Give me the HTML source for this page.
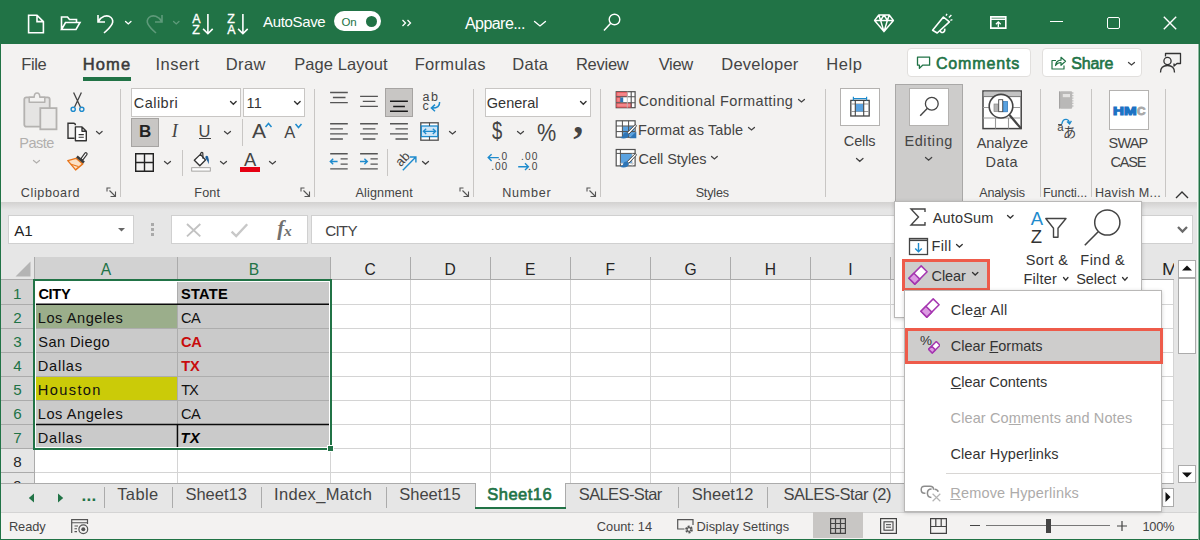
<!DOCTYPE html>
<html lang="en"><head><meta charset="utf-8"><title>Excel - Clear Formats</title>
<style>
html,body{margin:0;padding:0}
body{width:1200px;height:540px;position:relative;overflow:hidden;background:#e6e6e6;font-family:'Liberation Sans', sans-serif;}
.a{position:absolute;display:block}
.t{position:absolute;white-space:pre;line-height:1;display:block}
u{text-decoration:underline;text-underline-offset:1px}

</style></head>
<body>
<div class="a" style="left:0px;top:0px;width:1200px;height:44px;background:#217346;"></div>
<svg class="a" style="left:26px;top:13px;" width="20" height="22" viewBox="0 0 20 22"><path d="M2.6 2.2 H11 L17.4 8.6 V19.8 H2.6 Z M11 2.2 V8.6 H17.4" fill="none" stroke="#fff" stroke-width="1.6" stroke-linejoin="miter"/></svg>
<svg class="a" style="left:59px;top:14px;" width="24" height="18" viewBox="0 0 24 18"><path d="M2.5 15.5 V3 H8.5 L10.5 5.5 H17.5 V8.5 M2.5 15.5 L6.5 8.5 H21 L17 15.5 Z" fill="none" stroke="#fff" stroke-width="1.6" stroke-linejoin="miter"/></svg>
<svg class="a" style="left:95px;top:12px;" width="22" height="23" viewBox="0 0 22 23"><path d="M3 3 V10 H10 M3.5 9.5 C6 4.5 12 2 16 5.5 C20 9.5 17 14 9 21" fill="none" stroke="#fff" stroke-width="1.6" stroke-linejoin="miter"/></svg>
<svg class="a" style="left:122.5px;top:18.5px;" width="10.5" height="7.5" viewBox="0 0 10.5 7.5"><path d="M2.56 2.56 L5.25 4.94 L7.94 2.56" fill="none" stroke="#fff" stroke-width="1.4" stroke-linecap="round" stroke-linejoin="miter"/></svg>
<svg class="a" style="left:143px;top:12px;" width="22" height="23" viewBox="0 0 22 23"><path d="M19 3 V10 H12 M18.5 9.5 C16 4.5 10 2 6 5.5 C2 9.5 5 14 13 21" fill="none" stroke="#5e9a7a" stroke-width="1.6"/></svg>
<svg class="a" style="left:171px;top:18.5px;" width="10.5" height="7.5" viewBox="0 0 10.5 7.5"><path d="M2.56 2.56 L5.25 4.94 L7.94 2.56" fill="none" stroke="#5e9a7a" stroke-width="1.4" stroke-linecap="round" stroke-linejoin="miter"/></svg>
<span class="t" style="left:192.37px;top:13.00px;font-size:12.4px;color:#fff;-webkit-text-stroke:0.35px #fff;">A</span>
<span class="t" style="left:192.26px;top:24.00px;font-size:12.4px;color:#fff;-webkit-text-stroke:0.35px #fff;">Z</span>
<svg class="a" style="left:201px;top:12px;" width="14" height="24" viewBox="0 0 14 24"><path d="M6.9 1.9 V21.4 M2.1 16.9 L6.9 21.7 L11.7 16.9" fill="none" stroke="#fff" stroke-width="1.6" stroke-linejoin="miter"/></svg>
<span class="t" style="left:227.26px;top:13.00px;font-size:12.4px;color:#fff;-webkit-text-stroke:0.35px #fff;">Z</span>
<span class="t" style="left:227.37px;top:24.00px;font-size:12.4px;color:#fff;-webkit-text-stroke:0.35px #fff;">A</span>
<svg class="a" style="left:236px;top:12px;" width="14" height="24" viewBox="0 0 14 24"><path d="M6.9 1.9 V21.4 M2.1 16.9 L6.9 21.7 L11.7 16.9" fill="none" stroke="#fff" stroke-width="1.6" stroke-linejoin="miter"/></svg>
<span class="t" style="left:262.97px;top:14.00px;font-size:15px;color:#fff;letter-spacing:-0.336px;">AutoSave</span>
<div class="a" style="left:334px;top:11px;width:47px;height:20px;background:#fff;border-radius:10px;"></div>
<span class="t" style="left:341.46px;top:17.00px;font-size:11.5px;color:#217346;letter-spacing:-0.052px;">On</span>
<div class="a" style="left:365.5px;top:15.5px;width:11px;height:11px;background:#217346;border-radius:6px;"></div>
<svg class="a" style="left:400px;top:18px;" width="14" height="10" viewBox="0 0 14 10"><path d="M2.5 2 L5.5 5 L2.5 8 M7.5 2 L10.5 5 L7.5 8" fill="none" stroke="#fff" stroke-width="1.3"/></svg>
<span class="t" style="left:464.97px;top:16.00px;font-size:16px;color:#fff;letter-spacing:-0.556px;">Appare...</span>
<svg class="a" style="left:532px;top:18.5px;" width="16" height="9.5" viewBox="0 0 16 9.5"><path d="M2.56 2.56 L8.00 6.94 L13.44 2.56" fill="none" stroke="#fff" stroke-width="1.4" stroke-linecap="round" stroke-linejoin="miter"/></svg>
<svg class="a" style="left:600px;top:11px;" width="24" height="24" viewBox="0 0 24 24"><circle cx="14.5" cy="8.5" r="5.3" fill="none" stroke="#fff" stroke-width="1.4"/><path d="M10.7 12.3 L4 19.5" stroke="#fff" stroke-width="1.5" fill="none"/></svg>
<svg class="a" style="left:872px;top:13px;" width="24" height="21" viewBox="0 0 24 21"><path d="M6.8 2 H17.2 L21.4 7.4 L12 18.6 L2.6 7.4 Z M2.6 7.4 H21.4 M8.6 7.4 L12 18.6 L15.4 7.4 M6.8 2 L8.6 7.4 L12 2 L15.4 7.4 L17.2 2" fill="none" stroke="#fff" stroke-width="1.5" stroke-linejoin="round"/></svg>
<svg class="a" style="left:930px;top:12px;" width="24" height="24" viewBox="0 0 24 24"><path d="M13.4 5 L19.4 9.8 L7.2 21 L2.6 18.3 Z M10.2 18.6 C10.8 21.8 15.4 21 14.7 16.6" fill="none" stroke="#fff" stroke-width="1.6" stroke-linejoin="round"/><path d="M16 3.6 L17 1.8 M18.9 5.6 L21.4 3 M20.4 8.3 L22.4 7.7" stroke="#fff" stroke-width="1.4" fill="none"/></svg>
<svg class="a" style="left:989px;top:14.5px;" width="19" height="15" viewBox="0 0 19 15"><path d="M1.8 1.9 H16.8 V13.1 H1.8 Z M1.8 4.2 H16.8" fill="none" stroke="#fff" stroke-width="1.6" stroke-linejoin="miter"/><path d="M9.3 12 V7 M6.9 9.2 L9.3 6.8 L11.7 9.2" fill="none" stroke="#fff" stroke-width="1.3"/></svg>
<div class="a" style="left:1049.5px;top:20.5px;width:13.5px;height:1.4px;background:#fff;"></div>
<div class="a" style="left:1106.5px;top:16.5px;width:13px;height:12.5px;border:1.4px solid #fff;box-sizing:border-box;border-radius:2px;"></div>
<svg class="a" style="left:1162px;top:15px;" width="16" height="16" viewBox="0 0 16 16"><path d="M1.8 1.8 L14.2 14.2 M14.2 1.8 L1.8 14.2" stroke="#fff" stroke-width="1.4" fill="none"/></svg>
<div class="a" style="left:0px;top:44px;width:1200px;height:158px;background:#f3f2f1;"></div>
<span class="t" style="left:21.15px;top:56.00px;font-size:16.5px;color:#444;letter-spacing:-0.336px;">File</span>
<span class="t" style="left:155.48px;top:56.00px;font-size:16.5px;color:#444;letter-spacing:0.472px;">Insert</span>
<span class="t" style="left:225.65px;top:56.00px;font-size:16.5px;color:#444;letter-spacing:0.433px;">Draw</span>
<span class="t" style="left:294.15px;top:56.00px;font-size:16.5px;color:#444;letter-spacing:0.080px;">Page Layout</span>
<span class="t" style="left:414.65px;top:56.00px;font-size:16.5px;color:#444;letter-spacing:0.312px;">Formulas</span>
<span class="t" style="left:512.35px;top:56.00px;font-size:16.5px;color:#444;letter-spacing:0.265px;">Data</span>
<span class="t" style="left:575.95px;top:56.00px;font-size:16.5px;color:#444;letter-spacing:-0.259px;">Review</span>
<span class="t" style="left:658.63px;top:56.00px;font-size:16.5px;color:#444;letter-spacing:-0.279px;">View</span>
<span class="t" style="left:721.35px;top:56.00px;font-size:16.5px;color:#444;letter-spacing:0.214px;">Developer</span>
<span class="t" style="left:826.15px;top:56.00px;font-size:16.5px;color:#444;letter-spacing:0.636px;">Help</span>
<span class="t" style="left:82.65px;top:56.00px;font-size:16.5px;color:#3a3a3a;letter-spacing:1.157px;-webkit-text-stroke:0.55px #3a3a3a;">Home</span>
<div class="a" style="left:83px;top:77px;width:48px;height:4px;background:#217346;"></div>
<div class="a" style="left:906.6px;top:48.3px;width:124px;height:29px;background:#fff;border:1px solid #e1dfdd;box-sizing:border-box;border-radius:4px;"></div>
<svg class="a" style="left:916px;top:54.5px;" width="16" height="16" viewBox="0 0 16 16"><path d="M1.5 2.2 H13.6 V10.2 H6.6 L3.4 13.4 V10.2 H1.5 Z" fill="none" stroke="#217346" stroke-width="1.3" stroke-linejoin="round"/></svg>
<span class="t" style="left:935.99px;top:56.00px;font-size:16px;color:#217346;letter-spacing:0.833px;-webkit-text-stroke:0.6px #217346;">Comments</span>
<div class="a" style="left:1041.6px;top:48.3px;width:100px;height:29px;background:#fff;border:1px solid #e1dfdd;box-sizing:border-box;border-radius:4px;"></div>
<svg class="a" style="left:1049.5px;top:54px;" width="17" height="17" viewBox="0 0 17 17"><path d="M6 6.5 H2 V15 H14 V11.5 M5.5 11.5 C6 8 8.5 6.3 11 6.2 V3.3 L15.5 7.3 L11 11.3 V8.5 C8.5 8.5 7 9.3 5.5 11.5 Z" fill="none" stroke="#217346" stroke-width="1.2" stroke-linejoin="round"/></svg>
<span class="t" style="left:1071.27px;top:56.00px;font-size:16px;color:#217346;letter-spacing:-0.166px;-webkit-text-stroke:0.6px #217346;">Share</span>
<svg class="a" style="left:1126px;top:59.5px;" width="11" height="7.5" viewBox="0 0 11 7.5"><path d="M2.52 2.52 L5.50 4.98 L8.48 2.52" fill="none" stroke="#444" stroke-width="1.3" stroke-linecap="round" stroke-linejoin="miter"/></svg>
<svg class="a" style="left:1158px;top:51px;" width="25" height="24" viewBox="0 0 25 24"><circle cx="9.5" cy="10" r="3.6" fill="none" stroke="#333" stroke-width="1.3"/><path d="M2.5 21.5 C2.5 16 5.5 14.5 9.5 14.5 C13.5 14.5 16.5 16 16.5 21.5" fill="none" stroke="#333" stroke-width="1.3"/><path d="M7.5 5.5 V2.5 H22.5 V12.5 H19 L16 15 V12.5" fill="none" stroke="#333" stroke-width="1.3" stroke-linejoin="round"/></svg>
<svg class="a" style="left:22px;top:91px;" width="37" height="41" viewBox="0 0 37 41"><rect x="2.3" y="6.3" width="25.4" height="29.4" rx="2" fill="#e5e4e3" stroke="#b4b2b0" stroke-width="1.8"/><path d="M7.2 11.2 V6.2 H12.2 Q12.2 2 15 2 Q17.8 2 17.8 6.2 H22.8 V11.2 Z" fill="#f3f2f1" stroke="#b4b2b0" stroke-width="1.5" stroke-linejoin="round"/><rect x="18.3" y="17.1" width="16.2" height="21.2" fill="#ecebea" stroke="#b4b2b0" stroke-width="1.8"/></svg>
<span class="t" style="left:19.31px;top:136.00px;font-size:14.5px;color:#b1afad;letter-spacing:-0.540px;">Paste</span>
<svg class="a" style="left:30.6px;top:157.8px;" width="11.0" height="7.5" viewBox="0 0 11.0 7.5"><path d="M2.48 2.48 L5.50 5.02 L8.52 2.48" fill="none" stroke="#b1afad" stroke-width="1.2" stroke-linecap="round" stroke-linejoin="miter"/></svg>
<svg class="a" style="left:69px;top:91px;" width="17" height="23" viewBox="0 0 17 23"><path d="M4.6 1.5 L11.4 16 M12.4 1.5 L5.6 16" stroke="#444" stroke-width="1.3" fill="none"/><circle cx="4.2" cy="18.3" r="2.1" fill="none" stroke="#1e8bcd" stroke-width="1.4"/><circle cx="12.8" cy="18.3" r="2.1" fill="none" stroke="#1e8bcd" stroke-width="1.4"/></svg>
<svg class="a" style="left:66px;top:121px;" width="23" height="22" viewBox="0 0 23 22"><path d="M8.6 17.2 H2 V2.2 H7.6 Q9.4 2.2 9.4 4.2" fill="none" stroke="#333" stroke-width="1.4"/><path d="M9.4 5.9 H16 L20.3 10.2 V19.7 H9.4 Z M16 5.9 V10.2 H20.3" fill="#fff" stroke="#333" stroke-width="1.4" stroke-linejoin="round"/><path d="M12.6 13.6 H17.8 M12.6 16.2 H17.8" stroke="#333" stroke-width="1.1"/></svg>
<svg class="a" style="left:94px;top:128.6px;" width="10.6" height="7.4" viewBox="0 0 10.6 7.4"><path d="M2.52 2.52 L5.30 4.88 L8.08 2.52" fill="none" stroke="#444" stroke-width="1.3" stroke-linecap="round" stroke-linejoin="miter"/></svg>
<svg class="a" style="left:66px;top:150px;" width="23" height="22" viewBox="0 0 23 22"><path d="M1.8 10.6 L10 8.3 L16.8 13.9 L9.6 19.9 Z" fill="#fbe0c4" stroke="#e8751a" stroke-width="1.4" stroke-linejoin="round"/><path d="M5 14.2 L12.4 16.6" stroke="#e8751a" stroke-width="1.1"/><path d="M19.9 3.9 L16.3 8.8" stroke="#3a3a3a" stroke-width="3.6" stroke-linecap="round"/><path d="M19.9 3.9 L16.5 8.5" stroke="#fff" stroke-width="1.2" stroke-linecap="round"/><path d="M10.9 6.4 L18 12.4" stroke="#3a3a3a" stroke-width="2.6"/></svg>
<span class="t" style="left:20.86px;top:187.00px;font-size:12.6px;color:#444;letter-spacing:0.581px;">Clipboard</span>
<svg class="a" style="left:105.5px;top:186.5px;" width="11" height="11" viewBox="0 0 11 11"><path d="M1 4.5 V1 H4.5 M3.5 3.5 L9 9 M9.5 4.5 V9.5 H4.5" fill="none" stroke="#555" stroke-width="1.1"/></svg>
<div class="a" style="left:120px;top:89px;width:1px;height:108px;background:#c8c6c4;"></div>
<div class="a" style="left:131px;top:88px;width:110px;height:29px;background:#fff;border:1px solid #c8c6c4;box-sizing:border-box;"></div>
<span class="t" style="left:133.76px;top:96.00px;font-size:14.5px;color:#333;letter-spacing:0.470px;">Calibri</span>
<svg class="a" style="left:228px;top:98.8px;" width="10.7" height="7.8" viewBox="0 0 10.7 7.8"><path d="M2.56 2.56 L5.35 5.24 L8.14 2.56" fill="none" stroke="#333" stroke-width="1.4" stroke-linecap="round" stroke-linejoin="miter"/></svg>
<div class="a" style="left:243px;top:88px;width:62px;height:29px;background:#fff;border:1px solid #c8c6c4;box-sizing:border-box;"></div>
<span class="t" style="left:246.40px;top:96.00px;font-size:14.5px;color:#333;letter-spacing:0.250px;">11</span>
<svg class="a" style="left:291.8px;top:98.8px;" width="10.7" height="7.8" viewBox="0 0 10.7 7.8"><path d="M2.56 2.56 L5.35 5.24 L8.14 2.56" fill="none" stroke="#333" stroke-width="1.4" stroke-linecap="round" stroke-linejoin="miter"/></svg>
<div class="a" style="left:131px;top:118px;width:28px;height:29px;background:#c8c6c4;border:1px solid #a6a4a2;box-sizing:border-box;"></div>
<span class="t" style="left:138.93px;top:123.00px;font-size:17px;font-weight:700;color:#222;">B</span>
<span class="t" style="left:171.68px;top:122.00px;font-size:18px;font-style:italic;font-family:'Liberation Serif', serif;color:#444;">I</span>
<span class="t" style="left:198.44px;top:123.00px;font-size:16.5px;color:#444;">U</span>
<div class="a" style="left:198.5px;top:138.3px;width:12px;height:1.2px;background:#444;"></div>
<svg class="a" style="left:221.8px;top:128.7px;" width="11.0" height="7.5" viewBox="0 0 11.0 7.5"><path d="M2.52 2.52 L5.50 4.98 L8.48 2.52" fill="none" stroke="#444" stroke-width="1.3" stroke-linecap="round" stroke-linejoin="miter"/></svg>
<div class="a" style="left:242px;top:119px;width:1px;height:27px;background:#c8c6c4;"></div>
<span class="t" style="left:251.99px;top:120.00px;font-size:21px;color:#444;">A</span>
<svg class="a" style="left:264px;top:121px;" width="9" height="8" viewBox="0 0 9 8"><path d="M1.5 6 L4.5 2.5 L7.5 6" fill="none" stroke="#1e8bcd" stroke-width="1.5"/></svg>
<span class="t" style="left:284.34px;top:124.00px;font-size:16.5px;color:#444;">A</span>
<svg class="a" style="left:294px;top:121.5px;" width="9" height="8" viewBox="0 0 9 8"><path d="M1.5 2 L4.5 5.5 L7.5 2" fill="none" stroke="#1e8bcd" stroke-width="1.5"/></svg>
<svg class="a" style="left:134px;top:151.5px;" width="21" height="21" viewBox="0 0 21 21"><path d="M1.7 1.7 H19.3 V19.3 H1.7 Z M10.5 1.7 V19.3 M1.7 10.5 H19.3" fill="none" stroke="#222" stroke-width="1.4"/></svg>
<svg class="a" style="left:161.9px;top:158.5px;" width="11.0" height="7.5" viewBox="0 0 11.0 7.5"><path d="M2.52 2.52 L5.50 4.98 L8.48 2.52" fill="none" stroke="#444" stroke-width="1.3" stroke-linecap="round" stroke-linejoin="miter"/></svg>
<div class="a" style="left:182px;top:149.5px;width:1px;height:26.0px;background:#c8c6c4;"></div>
<svg class="a" style="left:190px;top:150px;" width="23" height="23" viewBox="0 0 23 23"><path d="M4.3 10.3 L10.4 4.4 L15.5 10 L9.8 15.7 Z" fill="#fff" stroke="#333" stroke-width="1.3" stroke-linejoin="round"/><path d="M10.3 4.6 L11 2.9 Q11.9 1.9 12.8 2.9 L13 8.8" fill="none" stroke="#333" stroke-width="1.2"/><path d="M15.3 6.8 Q16.8 5 18 6.6 Q19.4 9.6 18.7 14.3 Q17.4 10.6 15.6 8.6 Z" fill="#1f5f9a"/><rect x="1.7" y="17.7" width="18.6" height="3.4" fill="#fff" stroke="#9c9a98" stroke-width="0.9"/></svg>
<svg class="a" style="left:217.9px;top:158.5px;" width="11.0" height="7.5" viewBox="0 0 11.0 7.5"><path d="M2.52 2.52 L5.50 4.98 L8.48 2.52" fill="none" stroke="#444" stroke-width="1.3" stroke-linecap="round" stroke-linejoin="miter"/></svg>
<span class="t" style="left:244.11px;top:151.00px;font-size:18.4px;color:#444;">A</span>
<div class="a" style="left:240px;top:167px;width:20px;height:4.6px;background:#e60012;"></div>
<svg class="a" style="left:266.9px;top:158.5px;" width="11.0" height="7.5" viewBox="0 0 11.0 7.5"><path d="M2.52 2.52 L5.50 4.98 L8.48 2.52" fill="none" stroke="#444" stroke-width="1.3" stroke-linecap="round" stroke-linejoin="miter"/></svg>
<span class="t" style="left:194.37px;top:187.00px;font-size:12.6px;color:#444;letter-spacing:0.141px;">Font</span>
<svg class="a" style="left:299.5px;top:186.5px;" width="11" height="11" viewBox="0 0 11 11"><path d="M1 4.5 V1 H4.5 M3.5 3.5 L9 9 M9.5 4.5 V9.5 H4.5" fill="none" stroke="#555" stroke-width="1.1"/></svg>
<div class="a" style="left:314px;top:89px;width:1px;height:108px;background:#c8c6c4;"></div>
<svg class="a" style="left:329px;top:90px;" width="22" height="16" viewBox="0 0 22 16"><path d="M1.10 2.50 H18.80 M3.90 7.50 H16.50 M1.10 12.60 H18.80 " stroke="#555" stroke-width="1.35" fill="none"/></svg>
<svg class="a" style="left:359px;top:94px;" width="22" height="16" viewBox="0 0 22 16"><path d="M1.10 2.30 H18.90 M3.80 7.30 H16.40 M1.10 12.40 H18.90 " stroke="#555" stroke-width="1.35" fill="none"/></svg>
<div class="a" style="left:385px;top:88px;width:28px;height:29px;background:#c8c6c4;border:1px solid #a6a4a2;box-sizing:border-box;"></div>
<svg class="a" style="left:389px;top:99px;" width="22" height="16" viewBox="0 0 22 16"><path d="M1.00 2.30 H18.90 M4.20 7.40 H15.90 M1.00 12.30 H18.90 " stroke="#1a1a1a" stroke-width="1.5" fill="none"/></svg>
<span class="t" style="left:422.47px;top:91.00px;font-size:12.5px;color:#444;letter-spacing:1.550px;">ab</span>
<span class="t" style="left:422.47px;top:100.00px;font-size:12.5px;color:#444;">c</span>
<svg class="a" style="left:429px;top:100px;" width="13" height="13" viewBox="0 0 13 13"><path d="M10.6 2 Q11 8.2 3 8 M6 4.6 L2.4 8 L6 11.2" fill="none" stroke="#1e8bcd" stroke-width="1.5"/></svg>
<svg class="a" style="left:329px;top:121px;" width="22" height="22" viewBox="0 0 22 22"><path d="M1.10 2.70 H18.80 M1.10 7.80 H13.90 M1.10 12.90 H18.80 M1.10 18.00 H13.90 " stroke="#555" stroke-width="1.35" fill="none"/></svg>
<svg class="a" style="left:359px;top:121px;" width="22" height="22" viewBox="0 0 22 22"><path d="M1.10 2.70 H18.90 M3.80 7.80 H16.40 M1.10 12.90 H18.90 M3.80 18.00 H16.40 " stroke="#555" stroke-width="1.35" fill="none"/></svg>
<svg class="a" style="left:389px;top:121px;" width="22" height="22" viewBox="0 0 22 22"><path d="M1.00 2.70 H18.90 M6.50 7.80 H18.90 M1.00 12.90 H18.90 M6.50 18.00 H18.90 " stroke="#555" stroke-width="1.35" fill="none"/></svg>
<svg class="a" style="left:419px;top:121px;" width="21" height="21" viewBox="0 0 21 21"><rect x="1.8" y="1.8" width="17.4" height="17.4" fill="#fff" stroke="#505050" stroke-width="1.3"/><rect x="2.3" y="5" width="16.4" height="10.6" fill="#cfe6f7" stroke="#1e8bcd" stroke-width="1.3"/><path d="M10.5 1.8 V5 M10.5 15.6 V19.2" stroke="#505050" stroke-width="1.1"/><path d="M4.6 10.3 H16.4 M7.2 7.7 L4.4 10.3 L7.2 12.9 M13.8 7.7 L16.6 10.3 L13.8 12.9" fill="none" stroke="#1e8bcd" stroke-width="1.3"/></svg>
<svg class="a" style="left:447.2px;top:128.6px;" width="11.0" height="7.5" viewBox="0 0 11.0 7.5"><path d="M2.52 2.52 L5.50 4.98 L8.48 2.52" fill="none" stroke="#444" stroke-width="1.3" stroke-linecap="round" stroke-linejoin="miter"/></svg>
<svg class="a" style="left:329px;top:151px;" width="22" height="21" viewBox="0 0 22 21"><path d="M1.20 2.70 H18.70 M11.60 7.90 H18.70 M11.60 13.10 H18.70 M1.20 17.90 H18.70 " stroke="#555" stroke-width="1.35" fill="none"/></svg>
<svg class="a" style="left:328px;top:156px;" width="12" height="11" viewBox="0 0 12 11"><path d="M2.3 5.5 H9.6 M5.2 2.7 L2.3 5.5 L5.2 8.3" fill="none" stroke="#1e8bcd" stroke-width="1.4"/></svg>
<svg class="a" style="left:359px;top:151px;" width="22" height="21" viewBox="0 0 22 21"><path d="M1.10 2.70 H18.80 M11.50 7.90 H18.80 M11.50 13.10 H18.80 M1.10 17.90 H18.80 " stroke="#555" stroke-width="1.35" fill="none"/></svg>
<svg class="a" style="left:358px;top:156px;" width="12" height="11" viewBox="0 0 12 11"><path d="M2 5.5 H9.3 M6.4 2.7 L9.3 5.5 L6.4 8.3" fill="none" stroke="#1e8bcd" stroke-width="1.4"/></svg>
<div class="a" style="left:387px;top:149px;width:1px;height:26.5px;background:#c8c6c4;"></div>
<svg class="a" style="left:392px;top:148px;" width="28" height="26" viewBox="0 0 28 26"><text x="10.4" y="10.8" font-size="13" fill="#444" text-anchor="middle" dominant-baseline="central" transform="rotate(-47 10.4 10.8)" font-family="'Liberation Sans', sans-serif">ab</text><path d="M10.8 22.2 L23.8 9 M18 9 H23.9 V14.6" fill="none" stroke="#1e8bcd" stroke-width="1.4"/></svg>
<svg class="a" style="left:420px;top:159px;" width="11" height="7.6" viewBox="0 0 11 7.6"><path d="M2.52 2.52 L5.50 5.08 L8.48 2.52" fill="none" stroke="#444" stroke-width="1.3" stroke-linecap="round" stroke-linejoin="miter"/></svg>
<span class="t" style="left:355.48px;top:187.00px;font-size:12.6px;color:#444;letter-spacing:0.150px;">Alignment</span>
<svg class="a" style="left:459px;top:186.5px;" width="11" height="11" viewBox="0 0 11 11"><path d="M1 4.5 V1 H4.5 M3.5 3.5 L9 9 M9.5 4.5 V9.5 H4.5" fill="none" stroke="#555" stroke-width="1.1"/></svg>
<div class="a" style="left:473px;top:89px;width:1px;height:108px;background:#c8c6c4;"></div>
<div class="a" style="left:484.5px;top:88px;width:106.5px;height:29px;background:#fff;border:1px solid #c8c6c4;box-sizing:border-box;"></div>
<span class="t" style="left:486.77px;top:96.00px;font-size:14.5px;color:#333;letter-spacing:0.034px;">General</span>
<svg class="a" style="left:578px;top:98.8px;" width="10.6" height="7.8" viewBox="0 0 10.6 7.8"><path d="M2.56 2.56 L5.30 5.24 L8.04 2.56" fill="none" stroke="#333" stroke-width="1.4" stroke-linecap="round" stroke-linejoin="miter"/></svg>
<span class="t" style="left:492.33px;top:120.00px;font-size:23px;color:#444;transform:scaleX(0.8);transform-origin:0 50%;">$</span>
<svg class="a" style="left:515px;top:128.6px;" width="11" height="7.5" viewBox="0 0 11 7.5"><path d="M2.52 2.52 L5.50 4.98 L8.48 2.52" fill="none" stroke="#444" stroke-width="1.3" stroke-linecap="round" stroke-linejoin="miter"/></svg>
<span class="t" style="left:537.23px;top:122.00px;font-size:23.5px;color:#444;transform:scaleX(0.92);transform-origin:0 50%;">%</span>
<span class="t" style="left:573.30px;top:100.00px;font-size:40px;font-weight:700;font-family:'Liberation Serif', serif;color:#444;">,</span>
<svg class="a" style="left:486px;top:152px;" width="16" height="12" viewBox="0 0 16 12"><path d="M2.3 5.6 H12.8 M5.6 2.2 L2.2 5.6 L5.6 9" fill="none" stroke="#1e8bcd" stroke-width="1.4"/></svg>
<span class="t" style="left:497.67px;top:152.00px;font-size:10.2px;color:#444;letter-spacing:0.930px;">.0</span>
<span class="t" style="left:491.27px;top:162.00px;font-size:10.2px;color:#444;letter-spacing:0.829px;">.00</span>
<span class="t" style="left:521.07px;top:152.00px;font-size:10.2px;color:#444;letter-spacing:1.129px;">.00</span>
<svg class="a" style="left:516px;top:160.5px;" width="16" height="12" viewBox="0 0 16 12"><path d="M2.2 5.7 H12.3 M9 2.3 L12.4 5.7 L9 9.1" fill="none" stroke="#1e8bcd" stroke-width="1.4"/></svg>
<span class="t" style="left:528.07px;top:162.00px;font-size:10.2px;color:#444;letter-spacing:0.930px;">.0</span>
<span class="t" style="left:502.27px;top:187.00px;font-size:12.6px;color:#444;letter-spacing:0.729px;">Number</span>
<svg class="a" style="left:586px;top:186.5px;" width="11" height="11" viewBox="0 0 11 11"><path d="M1 4.5 V1 H4.5 M3.5 3.5 L9 9 M9.5 4.5 V9.5 H4.5" fill="none" stroke="#555" stroke-width="1.1"/></svg>
<div class="a" style="left:600px;top:89px;width:1px;height:108px;background:#c8c6c4;"></div>
<svg class="a" style="left:614.5px;top:90px;" width="22" height="20" viewBox="0 0 22 20"><rect x="1.2" y="1.7" width="18.9" height="16" fill="#fff" stroke="#505050" stroke-width="1.2"/><rect x="1.8" y="2.3" width="10.4" height="4" fill="#f4868a" stroke="#e8474c" stroke-width="0.8"/><rect x="1.8" y="7.4" width="3.4" height="4.7" fill="#f4868a" stroke="#e8474c" stroke-width="0.8"/><rect x="5.2" y="7.4" width="3" height="4.7" fill="#2e75b6"/><rect x="1.8" y="13.3" width="14.4" height="3.8" fill="#f4868a" stroke="#e8474c" stroke-width="0.8"/><path d="M1.2 6.8 H20.1 M1.2 12.7 H20.1 M16.2 1.7 V17.7" stroke="#505050" stroke-width="1.1" fill="none"/><path d="M12.3 1.7 V17.7" stroke="#b8b8b8" stroke-width="0.9" fill="none"/></svg>
<span class="t" style="left:638.46px;top:94.00px;font-size:14.5px;color:#444;letter-spacing:0.409px;">Conditional Formatting</span>
<svg class="a" style="left:796px;top:96.5px;" width="11" height="7.5" viewBox="0 0 11 7.5"><path d="M2.52 2.52 L5.50 4.98 L8.48 2.52" fill="none" stroke="#444" stroke-width="1.3" stroke-linecap="round" stroke-linejoin="miter"/></svg>
<svg class="a" style="left:614.5px;top:119px;" width="23" height="21" viewBox="0 0 23 21"><rect x="1.2" y="1.8" width="18.9" height="16.4" fill="#fff" stroke="#505050" stroke-width="1.2"/><rect x="7.6" y="7.2" width="12" height="10.5" fill="#5aa2e0"/><path d="M1.2 7 H20.1 M1.2 12.6 H20.1 M7.4 1.8 V18.2 M13.6 1.8 V18.2" stroke="#505050" stroke-width="1" fill="none"/><path d="M21.3 12.5 V19.2 H14.5 Z" fill="#2e75b6"/><path d="M19.6 6.2 L12.2 13.6 L13.8 15.2 L21 7.6 Q21.7 6.4 20.9 5.8 Q20.2 5.5 19.6 6.2 Z" fill="#fff" stroke="#444" stroke-width="1"/><path d="M11.8 13.6 Q8.6 13.4 8 16.4 Q7.4 18.2 4.6 18.6 Q9 20.4 12.4 18.4 Q14.6 16.6 13.6 15.2 Z" fill="#2e75b6"/></svg>
<span class="t" style="left:638.01px;top:123.00px;font-size:14.5px;color:#444;letter-spacing:0.095px;">Format as Table</span>
<svg class="a" style="left:746px;top:125.3px;" width="11" height="7.5" viewBox="0 0 11 7.5"><path d="M2.52 2.52 L5.50 4.98 L8.48 2.52" fill="none" stroke="#444" stroke-width="1.3" stroke-linecap="round" stroke-linejoin="miter"/></svg>
<svg class="a" style="left:614.5px;top:148px;" width="23" height="21" viewBox="0 0 23 21"><rect x="1.2" y="1.5" width="18.9" height="16.4" fill="#fff" stroke="#505050" stroke-width="1.2"/><rect x="5.6" y="5.6" width="11.4" height="9.6" fill="#5aa2e0"/><path d="M1.2 5.4 H20.1 M5.4 1.5 V17.9" stroke="#505050" stroke-width="1" fill="none"/><path d="M17.2 5.4 V17.9 M5.4 15.3 H20.1" stroke="#c0c0c0" stroke-width="0.8" fill="none"/><path d="M19.6 6.2 L12.2 13.6 L13.8 15.2 L21 7.6 Q21.7 6.4 20.9 5.8 Q20.2 5.5 19.6 6.2 Z" fill="#fff" stroke="#444" stroke-width="1"/><path d="M11.8 13.6 Q8.6 13.4 8 16.4 Q7.4 18.2 4.6 18.6 Q9 20.4 12.4 18.4 Q14.6 16.6 13.6 15.2 Z" fill="#2e75b6"/></svg>
<span class="t" style="left:638.46px;top:152.00px;font-size:14.5px;color:#444;letter-spacing:-0.044px;">Cell Styles</span>
<svg class="a" style="left:709.2px;top:154px;" width="10.8" height="7.5" viewBox="0 0 10.8 7.5"><path d="M2.52 2.52 L5.40 4.98 L8.28 2.52" fill="none" stroke="#444" stroke-width="1.3" stroke-linecap="round" stroke-linejoin="miter"/></svg>
<span class="t" style="left:695.63px;top:187.00px;font-size:12.6px;color:#444;letter-spacing:-0.154px;">Styles</span>
<div class="a" style="left:825px;top:89px;width:1px;height:108px;background:#c8c6c4;"></div>
<div class="a" style="left:840px;top:88px;width:40px;height:38px;background:#fff;border:1px solid #b4b2b0;box-sizing:border-box;"></div>
<svg class="a" style="left:849px;top:96px;" width="22" height="22" viewBox="0 0 22 22"><rect x="1.8" y="4.4" width="18.4" height="15.6" fill="#fff" stroke="#444" stroke-width="1.3"/><path d="M1.8 8 H20.2 M1.8 15.5 H20.2" stroke="#9a9a9a" stroke-width="1" fill="none"/><rect x="6.4" y="8" width="8.2" height="7.5" fill="#5aa2e0"/><path d="M6.3 4.4 V20 M14.7 4.4 V20" stroke="#444" stroke-width="1.1" fill="none"/><path d="M4.4 2.6 H17.6 M4.4 0.8 V4.4 M17.6 0.8 V4.4" stroke="#1e8bcd" stroke-width="1.2" fill="none"/></svg>
<span class="t" style="left:843.76px;top:134.00px;font-size:14.5px;color:#444;letter-spacing:-0.094px;">Cells</span>
<svg class="a" style="left:853.5px;top:155.5px;" width="11.5" height="7.8" viewBox="0 0 11.5 7.8"><path d="M2.52 2.52 L5.75 5.28 L8.98 2.52" fill="none" stroke="#444" stroke-width="1.3" stroke-linecap="round" stroke-linejoin="miter"/></svg>
<div class="a" style="left:894.5px;top:84px;width:68.5px;height:119px;background:#cdcccb;border:1px solid #a9a8a7;box-sizing:border-box;"></div>
<div class="a" style="left:909px;top:88px;width:40px;height:38px;background:#fff;border:1px solid #b4b2b0;box-sizing:border-box;"></div>
<svg class="a" style="left:916px;top:93px;" width="26" height="26" viewBox="0 0 26 26"><circle cx="15.8" cy="10.7" r="6.4" fill="none" stroke="#444" stroke-width="1.3"/><path d="M11.2 15.4 L4.2 22.7" stroke="#444" stroke-width="1.4" fill="none"/></svg>
<span class="t" style="left:904.41px;top:134.00px;font-size:14.5px;color:#444;letter-spacing:0.613px;">Editing</span>
<svg class="a" style="left:922.8px;top:155.3px;" width="11.2" height="7.7" viewBox="0 0 11.2 7.7"><path d="M2.52 2.52 L5.60 5.18 L8.68 2.52" fill="none" stroke="#444" stroke-width="1.3" stroke-linecap="round" stroke-linejoin="miter"/></svg>
<svg class="a" style="left:981px;top:89px;" width="42" height="42" viewBox="0 0 42 42"><rect x="2" y="2" width="38.2" height="37.6" fill="#fff" stroke="#444" stroke-width="1.5"/><rect x="2.7" y="2.7" width="36.8" height="4.6" fill="#c4c4c4"/><path d="M2 7.6 H40" stroke="#777" stroke-width="1"/><path d="M2 18.5 H40 M2 29 H40 M14.5 29 V39.6 M27.5 29 V39.6" stroke="#9a9a9a" stroke-width="1.1" fill="none"/><circle cx="20" cy="17.2" r="11.8" fill="#fff" stroke="#444" stroke-width="1.6"/><rect x="13" y="15" width="4.2" height="7.6" fill="#b4b4b4" stroke="#8a8a8a" stroke-width="0.7"/><rect x="17.7" y="10.7" width="4" height="12" fill="#fff" stroke="#444" stroke-width="0.9"/><rect x="22.3" y="12.6" width="4.3" height="10.2" fill="#5aa2e0" stroke="#2e75b6" stroke-width="0.7"/><path d="M28.5 26 L40 39.5" stroke="#444" stroke-width="2.2" fill="none"/></svg>
<span class="t" style="left:976.67px;top:136.00px;font-size:14.5px;color:#444;letter-spacing:-0.020px;">Analyze</span>
<span class="t" style="left:985.51px;top:155.00px;font-size:14.5px;color:#444;letter-spacing:0.450px;">Data</span>
<span class="t" style="left:979.18px;top:187.00px;font-size:12.6px;color:#444;letter-spacing:-0.161px;">Analysis</span>
<div class="a" style="left:1040px;top:89px;width:1px;height:108px;background:#c8c6c4;"></div>
<svg class="a" style="left:1057px;top:89px;" width="19" height="22" viewBox="0 0 19 22"><rect x="2.8" y="2.3" width="12.4" height="17.4" rx="1.2" fill="#b9b8b7"/><path d="M2.6 2.3 V19.7" stroke="#9c9b9a" stroke-width="1"/><rect x="5.8" y="5" width="7.2" height="3.2" fill="#e4e3e2"/><path d="M15.2 4 h1.2 M15.2 6.6 h1.2 M15.2 9.2 h1.2 M15.2 11.8 h1.2 M15.2 14.4 h1.2 M15.2 17 h1.2" stroke="#b9b8b7" stroke-width="1.3"/></svg>
<span class="t" style="left:1057.15px;top:122.00px;font-size:11.5px;color:#444;">a</span>
<div class="a" style="left:1057.7px;top:123.6px;width:4.6px;height:1px;background:#555;"></div>
<span class="t" style="left:1063.06px;top:126.00px;font-size:13.2px;font-family:'Liberation Sans','Noto Sans CJK JP',sans-serif;color:#444;">あ</span>
<svg class="a" style="left:1060px;top:117px;" width="12" height="9" viewBox="0 0 12 9"><path d="M1.8 7.2 Q2.6 2.2 6.2 2.4 Q9 2.7 9.6 6.6 M7 4.6 L9.6 7 L11.4 3.9" fill="none" stroke="#1e8bcd" stroke-width="1.3"/></svg>
<span class="t" style="left:1042.97px;top:187.00px;font-size:12.6px;color:#444;letter-spacing:-0.077px;">Functi...</span>
<div class="a" style="left:1091px;top:89px;width:1px;height:108px;background:#c8c6c4;"></div>
<div class="a" style="left:1109px;top:90px;width:40px;height:39.5px;background:#fff;border:1px solid #b4b2b0;box-sizing:border-box;"></div>
<span class="t" style="left:1112.59px;top:106.00px;font-size:11.3px;font-weight:700;color:#1c72c4;transform:scaleX(1.34);transform-origin:0 50%;-webkit-text-stroke:1.1px #1c72c4;">HM</span>
<span class="t" style="left:1136.92px;top:106.00px;font-size:11.3px;font-weight:700;color:#a9a9a9;transform:scaleX(1.04);transform-origin:0 50%;-webkit-text-stroke:0.9px #a9a9a9;">C</span>
<span class="t" style="left:1108.54px;top:136.00px;font-size:14.5px;color:#444;letter-spacing:-0.816px;">SWAP</span>
<span class="t" style="left:1110.56px;top:155.00px;font-size:14.5px;color:#444;letter-spacing:-1.214px;">CASE</span>
<span class="t" style="left:1094.97px;top:187.00px;font-size:12.6px;color:#444;letter-spacing:0.270px;">Havish M...</span>
<div class="a" style="left:1165px;top:89px;width:1px;height:108px;background:#c8c6c4;"></div>
<svg class="a" style="left:1174px;top:189.5px;" width="16" height="10" viewBox="0 0 16 10"><path d="M2 8 L8 2 L14 8" fill="none" stroke="#333" stroke-width="1.4"/></svg>
<div class="a" style="left:0px;top:202px;width:1200px;height:8px;background:linear-gradient(#d2d1d0,#e6e6e6);"></div>
<div class="a" style="left:0px;top:210px;width:1200px;height:47px;background:#e6e6e6;"></div>
<div class="a" style="left:7.5px;top:215px;width:126px;height:29.4px;background:#fff;border:1px solid #d0d0d0;box-sizing:border-box;"></div>
<span class="t" style="left:14.27px;top:223.00px;font-size:15.2px;color:#222;letter-spacing:-0.106px;">A1</span>
<svg class="a" style="left:117px;top:227px;" width="9" height="6" viewBox="0 0 9 6"><path d="M1 1 H8 L4.5 4.5 Z" fill="#666"/></svg>
<div class="a" style="left:151px;top:223px;width:3px;height:3px;background:#a9a9a9;"></div>
<div class="a" style="left:151px;top:228px;width:3px;height:3px;background:#a9a9a9;"></div>
<div class="a" style="left:151px;top:233px;width:3px;height:3px;background:#a9a9a9;"></div>
<div class="a" style="left:171px;top:215px;width:137px;height:29.4px;background:#fff;border:1px solid #d0d0d0;box-sizing:border-box;"></div>
<svg class="a" style="left:185px;top:222px;" width="18" height="16" viewBox="0 0 18 16"><path d="M2 2 L15.3 14.4 M15.3 2 L2 14.4" stroke="#c2c2c2" stroke-width="1.9" fill="none"/></svg>
<svg class="a" style="left:230px;top:222px;" width="19" height="17" viewBox="0 0 19 17"><path d="M1.6 9.6 L6.2 14 L17.2 2.2" stroke="#c8c8c8" stroke-width="2.4" fill="none"/></svg>
<span class="t" style="left:277.33px;top:218.00px;font-size:21px;font-weight:700;font-style:italic;font-family:'Liberation Serif', serif;color:#707070;">f</span>
<span class="t" style="left:284.06px;top:223.00px;font-size:15.5px;font-weight:700;font-style:italic;font-family:'Liberation Serif', serif;color:#707070;">x</span>
<div class="a" style="left:311px;top:215px;width:881.5px;height:29.4px;background:#fff;border:1px solid #d0d0d0;box-sizing:border-box;"></div>
<span class="t" style="left:325.23px;top:223.00px;font-size:15.2px;color:#444;letter-spacing:-0.768px;">CITY</span>
<svg class="a" style="left:1176px;top:225px;" width="13" height="10" viewBox="0 0 13 10"><path d="M2 2 L6.5 6.5 L11 2" fill="none" stroke="#6a6a6a" stroke-width="2.3"/></svg>
<div class="a" style="left:0px;top:257px;width:1174px;height:226px;background:#fff;"></div>
<div class="a" style="left:0px;top:257px;width:1174px;height:22px;background:#e6e6e6;"></div>
<div class="a" style="left:35px;top:257px;width:296px;height:22px;background:#d2d2d2;"></div>
<div class="a" style="left:0px;top:279px;width:1174px;height:1px;background:#ababab;"></div>
<svg class="a" style="left:14px;top:260px;" width="18" height="18" viewBox="0 0 18 18"><path d="M16.5 1.5 V16.5 H1.5 Z" fill="#b4b4b4"/></svg>
<div class="a" style="left:34px;top:257px;width:1px;height:22px;background:#ababab;"></div>
<div class="a" style="left:177px;top:257px;width:1px;height:22px;background:#ababab;"></div>
<div class="a" style="left:330px;top:257px;width:1px;height:22px;background:#ababab;"></div>
<div class="a" style="left:410px;top:257px;width:1px;height:22px;background:#ababab;"></div>
<div class="a" style="left:490px;top:257px;width:1px;height:22px;background:#ababab;"></div>
<div class="a" style="left:570px;top:257px;width:1px;height:22px;background:#ababab;"></div>
<div class="a" style="left:650px;top:257px;width:1px;height:22px;background:#ababab;"></div>
<div class="a" style="left:730px;top:257px;width:1px;height:22px;background:#ababab;"></div>
<div class="a" style="left:810px;top:257px;width:1px;height:22px;background:#ababab;"></div>
<div class="a" style="left:890px;top:257px;width:1px;height:22px;background:#ababab;"></div>
<div class="a" style="left:970px;top:257px;width:1px;height:22px;background:#ababab;"></div>
<div class="a" style="left:1050px;top:257px;width:1px;height:22px;background:#ababab;"></div>
<div class="a" style="left:1130px;top:257px;width:1px;height:22px;background:#ababab;"></div>
<span class="t" style="left:100.80px;top:262.00px;font-size:15.6px;color:#217346;">A</span>
<span class="t" style="left:248.87px;top:262.00px;font-size:15.6px;color:#217346;">B</span>
<span class="t" style="left:364.57px;top:262.00px;font-size:15.6px;color:#262626;">C</span>
<span class="t" style="left:444.60px;top:262.00px;font-size:15.6px;color:#262626;">D</span>
<span class="t" style="left:524.99px;top:262.00px;font-size:15.6px;color:#262626;">E</span>
<span class="t" style="left:605.41px;top:262.00px;font-size:15.6px;color:#262626;">F</span>
<span class="t" style="left:684.62px;top:262.00px;font-size:15.6px;color:#262626;">G</span>
<span class="t" style="left:764.86px;top:262.00px;font-size:15.6px;color:#262626;">H</span>
<span class="t" style="left:848.33px;top:262.00px;font-size:15.6px;color:#262626;">I</span>
<span class="t" style="left:1162.26px;top:262.00px;font-size:15.6px;color:#262626;transform:scaleX(1.2);transform-origin:0 50%;">M</span>
<div class="a" style="left:0px;top:280px;width:34px;height:203px;background:#e6e6e6;"></div>
<div class="a" style="left:0px;top:280px;width:34px;height:169px;background:#d2d2d2;"></div>
<div class="a" style="left:34px;top:280px;width:1px;height:203px;background:#ababab;"></div>
<div class="a" style="left:0px;top:304px;width:34px;height:1px;background:#ababab;"></div>
<span class="t" style="left:13.02px;top:286.00px;font-size:15.2px;color:#217346;">1</span>
<div class="a" style="left:0px;top:328px;width:34px;height:1px;background:#ababab;"></div>
<span class="t" style="left:13.22px;top:310.00px;font-size:15.2px;color:#217346;">2</span>
<div class="a" style="left:0px;top:352px;width:34px;height:1px;background:#ababab;"></div>
<span class="t" style="left:13.27px;top:334.00px;font-size:15.2px;color:#217346;">3</span>
<div class="a" style="left:0px;top:376px;width:34px;height:1px;background:#ababab;"></div>
<span class="t" style="left:13.27px;top:358.00px;font-size:15.2px;color:#217346;">4</span>
<div class="a" style="left:0px;top:400px;width:34px;height:1px;background:#ababab;"></div>
<span class="t" style="left:13.24px;top:382.00px;font-size:15.2px;color:#217346;">5</span>
<div class="a" style="left:0px;top:424px;width:34px;height:1px;background:#ababab;"></div>
<span class="t" style="left:13.17px;top:406.00px;font-size:15.2px;color:#217346;">6</span>
<div class="a" style="left:0px;top:448px;width:34px;height:1px;background:#ababab;"></div>
<span class="t" style="left:13.22px;top:430.00px;font-size:15.2px;color:#217346;">7</span>
<div class="a" style="left:0px;top:472px;width:34px;height:1px;background:#ababab;"></div>
<span class="t" style="left:13.22px;top:454.00px;font-size:15.2px;color:#262626;">8</span>
<div class="a" style="left:0px;top:496px;width:34px;height:1px;background:#ababab;"></div>
<span class="t" style="left:13.23px;top:478.00px;font-size:15.2px;color:#262626;">9</span>
<div class="a" style="left:35px;top:304px;width:1139px;height:1px;background:#d4d4d4;"></div>
<div class="a" style="left:35px;top:328px;width:1139px;height:1px;background:#d4d4d4;"></div>
<div class="a" style="left:35px;top:352px;width:1139px;height:1px;background:#d4d4d4;"></div>
<div class="a" style="left:35px;top:376px;width:1139px;height:1px;background:#d4d4d4;"></div>
<div class="a" style="left:35px;top:400px;width:1139px;height:1px;background:#d4d4d4;"></div>
<div class="a" style="left:35px;top:424px;width:1139px;height:1px;background:#d4d4d4;"></div>
<div class="a" style="left:35px;top:448px;width:1139px;height:1px;background:#d4d4d4;"></div>
<div class="a" style="left:35px;top:472px;width:1139px;height:1px;background:#d4d4d4;"></div>
<div class="a" style="left:35px;top:496px;width:1139px;height:1px;background:#d4d4d4;"></div>
<div class="a" style="left:177px;top:280px;width:1px;height:203px;background:#d4d4d4;"></div>
<div class="a" style="left:330px;top:280px;width:1px;height:203px;background:#d4d4d4;"></div>
<div class="a" style="left:410px;top:280px;width:1px;height:203px;background:#d4d4d4;"></div>
<div class="a" style="left:490px;top:280px;width:1px;height:203px;background:#d4d4d4;"></div>
<div class="a" style="left:570px;top:280px;width:1px;height:203px;background:#d4d4d4;"></div>
<div class="a" style="left:650px;top:280px;width:1px;height:203px;background:#d4d4d4;"></div>
<div class="a" style="left:730px;top:280px;width:1px;height:203px;background:#d4d4d4;"></div>
<div class="a" style="left:810px;top:280px;width:1px;height:203px;background:#d4d4d4;"></div>
<div class="a" style="left:890px;top:280px;width:1px;height:203px;background:#d4d4d4;"></div>
<div class="a" style="left:970px;top:280px;width:1px;height:203px;background:#d4d4d4;"></div>
<div class="a" style="left:1050px;top:280px;width:1px;height:203px;background:#d4d4d4;"></div>
<div class="a" style="left:1130px;top:280px;width:1px;height:203px;background:#d4d4d4;"></div>
<div class="a" style="left:1173px;top:280px;width:1px;height:203px;background:#d4d4d4;"></div>
<div class="a" style="left:35px;top:281px;width:295px;height:167px;background:#fff;"></div>
<div class="a" style="left:36px;top:282px;width:293px;height:165px;background:#cacaca;"></div>
<div class="a" style="left:36px;top:304px;width:293px;height:1px;background:#adadad;"></div>
<div class="a" style="left:36px;top:328px;width:293px;height:1px;background:#adadad;"></div>
<div class="a" style="left:36px;top:352px;width:293px;height:1px;background:#adadad;"></div>
<div class="a" style="left:36px;top:376px;width:293px;height:1px;background:#adadad;"></div>
<div class="a" style="left:36px;top:400px;width:293px;height:1px;background:#adadad;"></div>
<div class="a" style="left:36px;top:424px;width:293px;height:1px;background:#adadad;"></div>
<div class="a" style="left:177px;top:282px;width:1px;height:165px;background:#adadad;"></div>
<div class="a" style="left:36px;top:282px;width:141px;height:22px;background:#fff;"></div>
<div class="a" style="left:36px;top:305px;width:141px;height:23px;background:#9bae8b;"></div>
<div class="a" style="left:36px;top:377px;width:141px;height:23px;background:#cbcb08;"></div>
<svg class="a" style="left:35px;top:302px;" width="296" height="4" viewBox="0 0 296 4"><path d="M1 2.25 H294" stroke="#0a0a0a" stroke-width="1.5"/></svg>
<svg class="a" style="left:35px;top:422px;" width="296" height="4" viewBox="0 0 296 4"><path d="M1 2.4 H294" stroke="#0a0a0a" stroke-width="1.5"/></svg>
<svg class="a" style="left:175px;top:424px;" width="5" height="24" viewBox="0 0 5 24"><path d="M2.45 0 V23" stroke="#0a0a0a" stroke-width="1.5"/></svg>
<div class="a" style="left:33px;top:279px;width:299px;height:171px;border:2px solid #217346;box-sizing:border-box;"></div>
<div class="a" style="left:327px;top:445px;width:7px;height:7px;background:#fff;"></div>
<div class="a" style="left:328px;top:446px;width:5px;height:5px;background:#217346;"></div>
<span class="t" style="left:38.40px;top:287.00px;font-size:14.6px;font-weight:700;color:#000;letter-spacing:-0.339px;">CITY</span>
<span class="t" style="left:181.08px;top:287.00px;font-size:14.6px;font-weight:700;color:#000;letter-spacing:0.230px;">STATE</span>
<span class="t" style="left:37.80px;top:311.00px;font-size:14.6px;color:#111;letter-spacing:0.539px;">Los Angeles</span>
<span class="t" style="left:180.96px;top:311.00px;font-size:14.6px;color:#111;letter-spacing:-0.511px;">CA</span>
<span class="t" style="left:38.34px;top:335.00px;font-size:14.6px;color:#111;letter-spacing:0.390px;">San Diego</span>
<span class="t" style="left:181.10px;top:335.00px;font-size:14.6px;font-weight:700;color:#c80d0d;letter-spacing:-0.310px;">CA</span>
<span class="t" style="left:37.80px;top:359.00px;font-size:14.6px;color:#111;letter-spacing:0.733px;">Dallas</span>
<span class="t" style="left:181.34px;top:359.00px;font-size:14.6px;font-weight:700;color:#c80d0d;letter-spacing:-0.364px;">TX</span>
<span class="t" style="left:37.80px;top:383.00px;font-size:14.6px;color:#111;letter-spacing:1.381px;">Houston</span>
<span class="t" style="left:181.37px;top:383.00px;font-size:14.6px;color:#111;letter-spacing:-1.222px;">TX</span>
<span class="t" style="left:37.80px;top:407.00px;font-size:14.6px;color:#111;letter-spacing:0.539px;">Los Angeles</span>
<span class="t" style="left:180.96px;top:407.00px;font-size:14.6px;color:#111;letter-spacing:-0.511px;">CA</span>
<span class="t" style="left:37.80px;top:431.00px;font-size:14.6px;color:#111;letter-spacing:0.733px;">Dallas</span>
<span class="t" style="left:180.47px;top:431.00px;font-size:14.6px;font-weight:700;font-style:italic;color:#000;letter-spacing:0.650px;">TX</span>
<div class="a" style="left:1174px;top:257px;width:26px;height:226px;background:#e6e6e6;"></div>
<div class="a" style="left:1177.5px;top:260px;width:18.5px;height:17.5px;background:#fff;border:1px solid #ababab;box-sizing:border-box;"></div>
<svg class="a" style="left:1181px;top:264px;" width="12" height="8" viewBox="0 0 12 8"><path d="M1 6.5 L6 1.5 L11 6.5 Z" fill="#111"/></svg>
<div class="a" style="left:1177.5px;top:278px;width:18.5px;height:76px;background:#fff;border:1px solid #ababab;box-sizing:border-box;"></div>
<div class="a" style="left:1177.5px;top:465px;width:18.5px;height:18px;background:#fff;border:1px solid #ababab;box-sizing:border-box;"></div>
<svg class="a" style="left:1181px;top:470.5px;" width="12" height="8" viewBox="0 0 12 8"><path d="M1 1.5 L6 6.5 L11 1.5 Z" fill="#111"/></svg>
<div class="a" style="left:0px;top:483px;width:1200px;height:29px;background:#e6e6e6;"></div>
<div class="a" style="left:0px;top:483px;width:1174px;height:1px;background:#ababab;"></div>
<svg class="a" style="left:27px;top:492px;" width="9" height="12" viewBox="0 0 9 12"><path d="M7 1.5 V10.5 L1.8 6 Z" fill="#217346"/></svg>
<svg class="a" style="left:56px;top:492px;" width="9" height="12" viewBox="0 0 9 12"><path d="M2 1.5 V10.5 L7.2 6 Z" fill="#217346"/></svg>
<span class="t" style="left:81.55px;top:487.00px;font-size:17px;font-weight:700;color:#217346;letter-spacing:0.226px;">...</span>
<div class="a" style="left:104px;top:487px;width:1px;height:20.5px;background:#ababab;"></div>
<div class="a" style="left:172px;top:487px;width:1px;height:20.5px;background:#ababab;"></div>
<div class="a" style="left:261px;top:487px;width:1px;height:20.5px;background:#ababab;"></div>
<div class="a" style="left:386px;top:487px;width:1px;height:20.5px;background:#ababab;"></div>
<div class="a" style="left:678px;top:487px;width:1px;height:20.5px;background:#ababab;"></div>
<div class="a" style="left:767px;top:487px;width:1px;height:20.5px;background:#ababab;"></div>
<span class="t" style="left:117.13px;top:486.00px;font-size:16.5px;color:#444;letter-spacing:0.413px;">Table</span>
<span class="t" style="left:185.45px;top:486.00px;font-size:16.5px;color:#444;letter-spacing:-0.002px;">Sheet13</span>
<span class="t" style="left:273.98px;top:486.00px;font-size:16.5px;color:#444;letter-spacing:0.361px;">Index_Match</span>
<span class="t" style="left:399.25px;top:486.00px;font-size:16.5px;color:#444;letter-spacing:-0.007px;">Sheet15</span>
<span class="t" style="left:578.75px;top:486.00px;font-size:16.5px;color:#444;letter-spacing:-0.605px;">SALES-Star</span>
<span class="t" style="left:691.75px;top:486.00px;font-size:16.5px;color:#444;letter-spacing:0.016px;">Sheet12</span>
<span class="t" style="left:783.45px;top:486.00px;font-size:16.5px;color:#444;letter-spacing:-0.434px;">SALES-Star (2)</span>
<div class="a" style="left:475px;top:483px;width:90.5px;height:24.5px;background:#fff;"></div>
<div class="a" style="left:474.5px;top:483px;width:1px;height:24px;background:#ababab;"></div>
<div class="a" style="left:565px;top:483px;width:1px;height:24px;background:#ababab;"></div>
<div class="a" style="left:474.5px;top:507px;width:91px;height:2.2px;background:#217346;"></div>
<span class="t" style="left:487.25px;top:486.00px;font-size:16.5px;color:#217346;letter-spacing:0.498px;-webkit-text-stroke:0.65px #217346;">Sheet16</span>
<div class="a" style="left:1162px;top:488px;width:12px;height:18.5px;background:#fff;border:1px solid #ababab;box-sizing:border-box;"></div>
<svg class="a" style="left:1164px;top:491px;" width="8" height="12" viewBox="0 0 8 12"><path d="M1.5 1 V11 L6.5 6 Z" fill="#111"/></svg>
<div class="a" style="left:0px;top:512px;width:1200px;height:28px;background:#f3f2f1;"></div>
<div class="a" style="left:0px;top:511.5px;width:1200px;height:1px;background:#d4d4d4;"></div>
<span class="t" style="left:8.95px;top:521.00px;font-size:12.8px;color:#444;letter-spacing:-0.056px;">Ready</span>
<svg class="a" style="left:70px;top:517.5px;" width="20" height="17" viewBox="0 0 20 17"><path d="M1.7 15 V1.7 H17.5 V6" fill="none" stroke="#555" stroke-width="1.2"/><path d="M1.7 4.8 H17.5 M4.5 8 H8 M4.5 10.8 H7 M4.5 13.6 H7" stroke="#555" stroke-width="1.1" fill="none"/><circle cx="13.3" cy="11.3" r="4.4" fill="#f3f2f1" stroke="#555" stroke-width="1.2"/><circle cx="13.3" cy="11.3" r="2" fill="#555"/></svg>
<span class="t" style="left:596.85px;top:521.00px;font-size:12.8px;color:#444;letter-spacing:-0.034px;">Count: 14</span>
<svg class="a" style="left:675.5px;top:517.5px;" width="20" height="18" viewBox="0 0 20 18"><path d="M8.5 11 H1.7 V1.7 H17 V7" fill="none" stroke="#555" stroke-width="1.2"/><circle cx="13" cy="11.5" r="3" fill="none" stroke="#555" stroke-width="1.8" stroke-dasharray="2 1.1"/><circle cx="13" cy="11.5" r="1.9" fill="none" stroke="#555" stroke-width="1.1"/></svg>
<span class="t" style="left:696.45px;top:521.00px;font-size:12.8px;color:#444;letter-spacing:0.063px;">Display Settings</span>
<div class="a" style="left:813px;top:512px;width:49.5px;height:26px;background:#c8c6c4;"></div>
<svg class="a" style="left:828.5px;top:516.5px;" width="18" height="18" viewBox="0 0 18 18"><path d="M1.6 1.6 H16.4 V16.4 H1.6 Z M6.5 1.6 V16.4 M11.5 1.6 V16.4 M1.6 6.5 H16.4 M1.6 11.5 H16.4" fill="none" stroke="#444" stroke-width="1.2"/></svg>
<svg class="a" style="left:878.5px;top:516.5px;" width="19" height="18" viewBox="0 0 19 18"><rect x="1.6" y="1.6" width="15.8" height="14.8" fill="none" stroke="#444" stroke-width="1.2"/><rect x="5" y="4.8" width="9" height="8.4" fill="none" stroke="#444" stroke-width="1.1"/><path d="M7 7.7 H12 M7 10.2 H12" stroke="#444" stroke-width="1"/></svg>
<svg class="a" style="left:928.5px;top:516.5px;" width="19" height="18" viewBox="0 0 19 18"><path d="M1.6 1.6 H17.4 V16.4 H1.6 Z M6.8 1.6 V9.5 M12.2 1.6 V9.5 M1.6 9.5 H17.4" fill="none" stroke="#444" stroke-width="1.2"/></svg>
<div class="a" style="left:970px;top:525.2px;width:9.6px;height:1.2px;background:#444;"></div>
<div class="a" style="left:985.5px;top:525.3px;width:124px;height:1px;background:#777;"></div>
<div class="a" style="left:1045.5px;top:518.8px;width:5.6px;height:14.5px;background:#444;"></div>
<svg class="a" style="left:1116px;top:520px;" width="12" height="12" viewBox="0 0 12 12"><path d="M1 6 H11 M6 1 V11" stroke="#444" stroke-width="1.2" fill="none"/></svg>
<span class="t" style="left:1142.53px;top:521.00px;font-size:12.8px;color:#444;letter-spacing:-0.268px;">100%</span>
<div class="a" style="left:894px;top:201px;width:248px;height:117px;background:#fff;border:1px solid #b9b8b7;box-sizing:border-box;box-shadow:0 1px 4px rgba(0,0,0,.18);"></div>
<svg class="a" style="left:909px;top:207px;" width="19" height="20" viewBox="0 0 19 20"><path d="M16 5 V2 H2 L9.5 10 L2 18 H16 V15" fill="none" stroke="#444" stroke-width="1.4" stroke-linejoin="miter"/></svg>
<span class="t" style="left:932.67px;top:211.00px;font-size:14.5px;color:#333;letter-spacing:0.171px;">AutoSum</span>
<svg class="a" style="left:1005.2px;top:213.4px;" width="10.6" height="7.6" viewBox="0 0 10.6 7.6"><path d="M2.52 2.52 L5.30 5.08 L8.08 2.52" fill="none" stroke="#333" stroke-width="1.3" stroke-linecap="round" stroke-linejoin="miter"/></svg>
<svg class="a" style="left:907.5px;top:236.5px;" width="21" height="19" viewBox="0 0 21 19"><rect x="1.5" y="1.5" width="18" height="16" fill="#fff" stroke="#444" stroke-width="1.3"/><path d="M1.5 3.3 H19.5" stroke="#444" stroke-width="1.6"/><path d="M10.5 6 V14.5 M7.2 11.5 L10.5 14.8 L13.8 11.5" fill="none" stroke="#1e8bcd" stroke-width="1.4"/></svg>
<span class="t" style="left:931.51px;top:239.00px;font-size:14.5px;color:#333;letter-spacing:0.376px;">Fill</span>
<svg class="a" style="left:954px;top:241.8px;" width="10.8" height="7.6" viewBox="0 0 10.8 7.6"><path d="M2.52 2.52 L5.40 5.08 L8.28 2.52" fill="none" stroke="#333" stroke-width="1.3" stroke-linecap="round" stroke-linejoin="miter"/></svg>
<div class="a" style="left:902px;top:259px;width:88px;height:31.5px;background:#cecdcc;border:3px solid #ee5b4a;box-sizing:border-box;"></div>
<svg class="a" style="left:907.8px;top:265.1px;" width="20.0" height="20.0" viewBox="0 0 20 20"><path d="M0.9 13.2 L13.2 0.9 L19.1 6.8 L6.8 19.1 Z" fill="#fff" stroke="#a536b0" stroke-width="1.50" stroke-linejoin="round"/><path d="M0.9 13.2 L5.9 8.2 L11.8 14.1 L6.8 19.1 Z" fill="#dc9be2" stroke="#a536b0" stroke-width="1.50" stroke-linejoin="round"/></svg>
<span class="t" style="left:931.56px;top:269.00px;font-size:14.5px;color:#333;letter-spacing:-0.070px;">Clear</span>
<svg class="a" style="left:969.6px;top:270.4px;" width="10.4" height="7.6" viewBox="0 0 10.4 7.6"><path d="M2.52 2.52 L5.20 5.08 L7.88 2.52" fill="none" stroke="#333" stroke-width="1.3" stroke-linecap="round" stroke-linejoin="miter"/></svg>
<span class="t" style="left:1030.63px;top:210.00px;font-size:18.5px;color:#1e8bcd;">A</span>
<span class="t" style="left:1030.79px;top:228.00px;font-size:18.5px;color:#333;">Z</span>
<svg class="a" style="left:1044px;top:216px;" width="24" height="23" viewBox="0 0 24 23"><path d="M1.8 2.5 H22 L14 12.2 V21.3 H9.5 V12.2 Z" fill="none" stroke="#444" stroke-width="1.4" stroke-linejoin="round"/></svg>
<span class="t" style="left:1025.74px;top:253.00px;font-size:14.5px;color:#333;letter-spacing:0.398px;">Sort &amp;</span>
<span class="t" style="left:1023.51px;top:272.00px;font-size:14.5px;color:#333;letter-spacing:0.219px;">Filter</span>
<svg class="a" style="left:1060.5px;top:274.7px;" width="9.5" height="7.7" viewBox="0 0 9.5 7.7"><path d="M2.52 2.52 L4.75 5.18 L6.98 2.52" fill="none" stroke="#333" stroke-width="1.3" stroke-linecap="round" stroke-linejoin="miter"/></svg>
<svg class="a" style="left:1082px;top:206px;" width="40" height="41" viewBox="0 0 40 41"><circle cx="25.3" cy="16.5" r="12.6" fill="none" stroke="#444" stroke-width="1.5"/><path d="M16.2 25.8 L2.8 39.2" stroke="#444" stroke-width="1.6" fill="none"/></svg>
<span class="t" style="left:1080.31px;top:253.00px;font-size:14.5px;color:#333;letter-spacing:0.479px;">Find &amp;</span>
<span class="t" style="left:1076.24px;top:272.00px;font-size:14.5px;color:#333;letter-spacing:-0.070px;">Select</span>
<svg class="a" style="left:1119.8px;top:274.7px;" width="9.8" height="7.7" viewBox="0 0 9.8 7.7"><path d="M2.52 2.52 L4.90 5.18 L7.28 2.52" fill="none" stroke="#333" stroke-width="1.3" stroke-linecap="round" stroke-linejoin="miter"/></svg>
<div class="a" style="left:904px;top:290px;width:258.4px;height:222px;background:#fff;border:1px solid #b9b8b7;box-sizing:border-box;box-shadow:0 1px 4px rgba(0,0,0,.18);"></div>
<svg class="a" style="left:920px;top:298px;" width="20.0" height="20.0" viewBox="0 0 20 20"><path d="M0.9 13.2 L13.2 0.9 L19.1 6.8 L6.8 19.1 Z" fill="#fff" stroke="#a536b0" stroke-width="1.50" stroke-linejoin="round"/><path d="M0.9 13.2 L5.9 8.2 L11.8 14.1 L6.8 19.1 Z" fill="#dc9be2" stroke="#a536b0" stroke-width="1.50" stroke-linejoin="round"/></svg>
<span class="t" style="left:950.76px;top:303.00px;font-size:14.5px;color:#333;letter-spacing:0.313px;">Cle<u>a</u>r All</span>
<div class="a" style="left:905px;top:328px;width:258px;height:35.5px;background:#cecdcc;border:3px solid #ee5b4a;box-sizing:border-box;"></div>
<span class="t" style="left:920.09px;top:334.00px;font-size:13.5px;color:#333;">%</span>
<svg class="a" style="left:927.6px;top:341.4px;" width="12.6" height="12.6" viewBox="0 0 20 20"><path d="M0.9 13.2 L13.2 0.9 L19.1 6.8 L6.8 19.1 Z" fill="#fff" stroke="#a536b0" stroke-width="2.38" stroke-linejoin="round"/><path d="M0.9 13.2 L5.9 8.2 L11.8 14.1 L6.8 19.1 Z" fill="#dc9be2" stroke="#a536b0" stroke-width="2.38" stroke-linejoin="round"/></svg>
<span class="t" style="left:950.76px;top:339.00px;font-size:14.5px;color:#333;letter-spacing:-0.008px;">Clear <u>F</u>ormats</span>
<span class="t" style="left:950.76px;top:375.00px;font-size:14.5px;color:#333;letter-spacing:-0.020px;"><u>C</u>lear Contents</span>
<span class="t" style="left:950.56px;top:411.00px;font-size:14.5px;color:#adabaa;letter-spacing:0.119px;">Clear Co<u>m</u>ments and Notes</span>
<span class="t" style="left:950.46px;top:447.00px;font-size:14.5px;color:#333;letter-spacing:0.112px;">Clear Hyper<u>l</u>inks</span>
<div class="a" style="left:946px;top:473px;width:216px;height:1px;background:#d8d6d4;"></div>
<svg class="a" style="left:918.5px;top:483.5px;" width="24" height="19" viewBox="0 0 24 19"><path d="M14.6 5.8 Q14.6 2.2 11 2.2 H5.6 Q2.2 2.2 2.2 5.7 Q2.2 9.2 5.6 9.2 H6.4" fill="none" stroke="#8c8c8c" stroke-width="1.5"/><path d="M12.6 5.1 Q8.4 5.1 8.4 9.3 Q8.4 13.4 12.4 13.4 M15.6 5.2 Q18.6 5.4 19.2 7.8" fill="none" stroke="#8c8c8c" stroke-width="1.5"/><path d="M13.6 9.8 L21.3 17.2 M21.3 9.8 L13.6 17.2" stroke="#b4b4b4" stroke-width="1.2" fill="none"/></svg>
<span class="t" style="left:950.31px;top:486.00px;font-size:14.5px;color:#adabaa;letter-spacing:0.175px;"><u>R</u>emove Hyperlinks</span>
<div class="a" style="left:0px;top:44px;width:1.2px;height:496px;background:#217346;"></div>
<div class="a" style="left:0px;top:538.5px;width:1200px;height:1.5px;background:#217346;"></div>
<div class="a" style="left:1197px;top:44px;width:1px;height:494px;background:#f4f8f5;"></div>
<div class="a" style="left:1198px;top:44px;width:1px;height:496px;background:#8fb9a0;"></div>
<div class="a" style="left:1199px;top:44px;width:1px;height:496px;background:#217346;"></div>
</body></html>
